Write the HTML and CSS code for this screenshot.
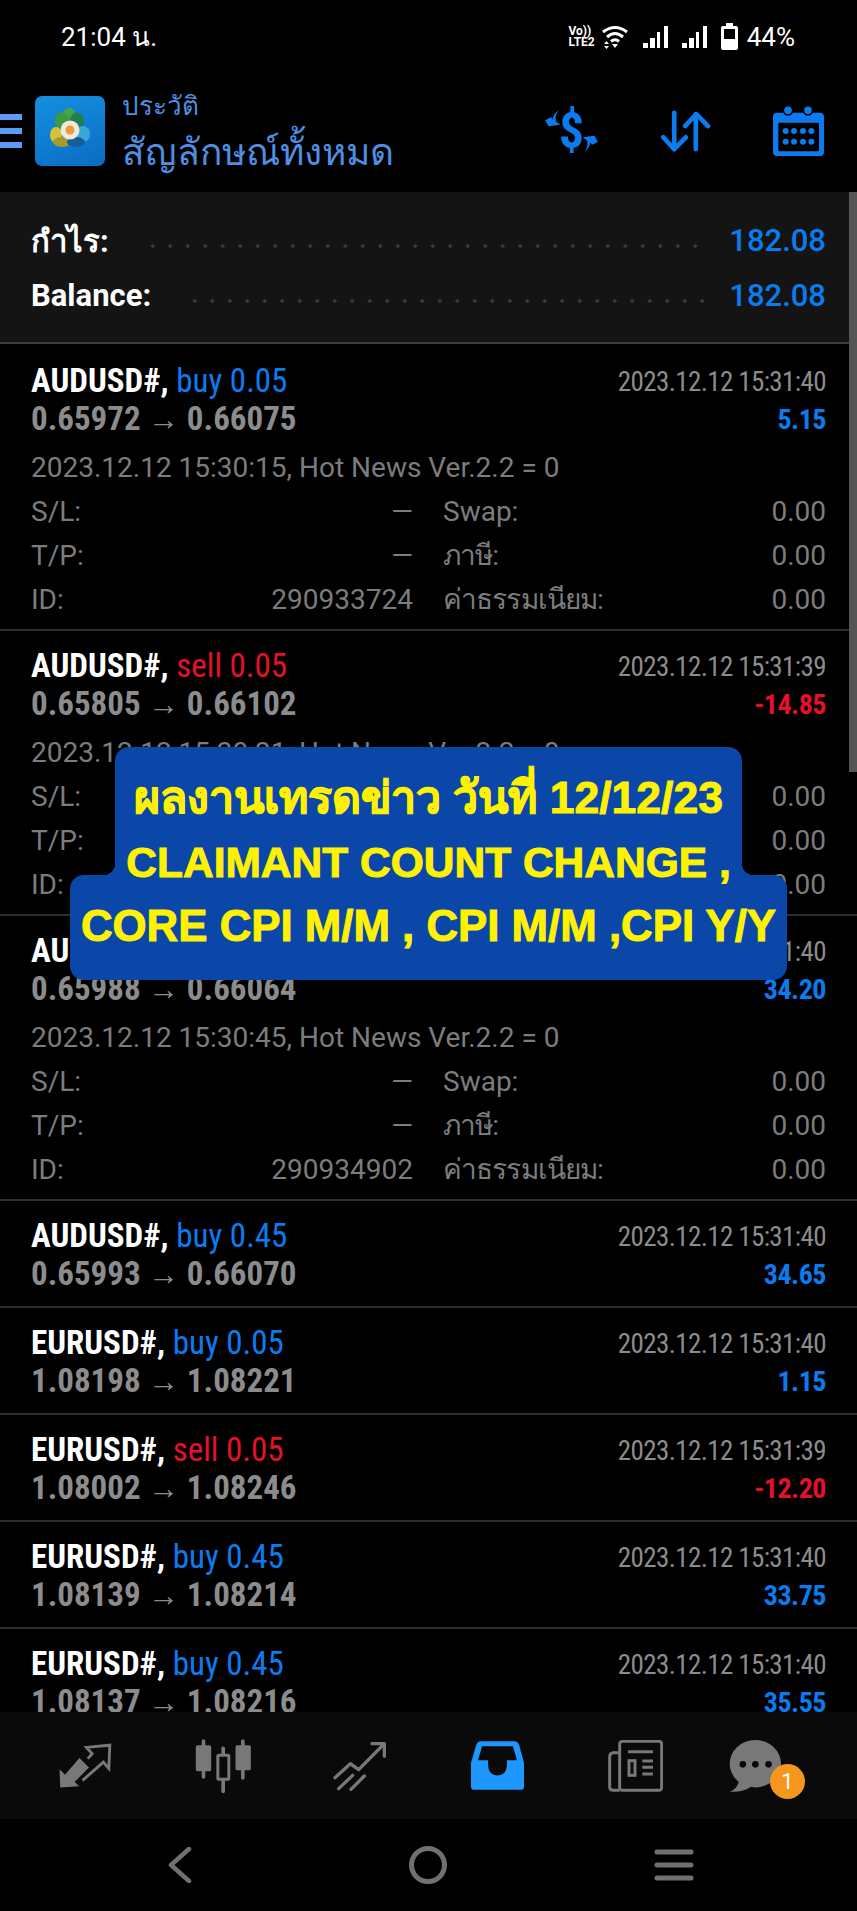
FILE: index.html
```html
<!DOCTYPE html>
<html lang="th">
<head>
    <meta charset="UTF-8">
    <meta name="viewport" content="width=device-width, initial-scale=1.0">
    <title>ประวัติ</title>
    <link rel="stylesheet" href="styles.css">
</head>
<body>
    <div class="status-bar">
        <span class="clock">21:04 น.</span>
        <div class="status-icons">
            <span class="volte"><span>Vo))</span><span>LTE2</span></span>
            <svg class="wifi" width="28" height="24" viewBox="0 0 28 24" fill="none" stroke="#fff" stroke-width="3">
                <path d="M2 7Q14 -2 26 7"/>
                <path d="M6 12Q14 5 22 12"/>
                <path d="M10 16.500Q14 13 18 16.500"/>
                <path d="M3 19L5.500 16L8 19ZM3 21L5.500 24L8 21Z" fill="#fff" stroke="none"/>
                <path d="M11 19H17L14 23Z" fill="#fff" stroke="none"/>
            </svg>
            <svg class="signal" width="25" height="22" viewBox="0 0 25 22" fill="#fff">
                <rect x="0" y="17" width="5" height="5"/><rect x="7" y="12" width="5" height="10"/><rect x="14" y="6" width="3" height="16"/><rect x="21" y="0" width="4" height="22"/>
            </svg>
            <svg class="signal" width="25" height="22" viewBox="0 0 25 22" fill="#fff">
                <rect x="0" y="17" width="5" height="5"/><rect x="7" y="12" width="5" height="10"/><rect x="14" y="6" width="3" height="16"/><rect x="21" y="0" width="4" height="22"/>
            </svg>
            <svg class="battery" width="17" height="27" viewBox="0 0 17 27">
                <path d="M5 0H12V3H15Q17 3 17 5V25Q17 27 15 27H2Q0 27 0 25V5Q0 3 2 3H5Z" fill="#fff"/>
                <rect x="3" y="6" width="11" height="10" fill="#000"/>
            </svg>
            <span class="battery-level">44%</span>
        </div>
    </div>

    <header class="top-bar">
        <div class="menu-bars"><i></i><i></i><i></i></div>
        <div class="app-logo">
            <svg width="70" height="70" viewBox="0 0 70 70">
                <ellipse cx="34" cy="18" rx="6" ry="6" fill="#4aa54a"/>
                <ellipse cx="27" cy="25" rx="7" ry="9" fill="#3f9a45"/>
                <ellipse cx="42" cy="25" rx="7" ry="9" fill="#1f7f50"/>
                <ellipse cx="21" cy="39" rx="6" ry="8" fill="#d8c23c"/>
                <ellipse cx="27" cy="46" rx="9" ry="5" fill="#a89a2e"/>
                <ellipse cx="48" cy="38" rx="7" ry="8" fill="#3aa7d8"/>
                <ellipse cx="41" cy="46" rx="9" ry="5" fill="#155f96"/>
                <circle cx="35" cy="34" r="9.500" fill="#f0e9dc"/>
                <circle cx="35" cy="34" r="4.500" fill="#ee9a3a"/>
            </svg>
        </div>
        <div class="titles">
            <div class="title-small">ประวัติ</div>
            <div class="title-large">สัญลักษณ์ทั้งหมด</div>
        </div>
        <div class="top-actions">
            <svg class="icon-dollar" width="53" height="44" viewBox="20 298 158 132" fill="#0a7cf0">
                <text x="99" y="414" text-anchor="middle" class="dollar-glyph">$</text>
                <path d="M62 300Q48 315 52 335L65 345L30 350L20 332L38 322L42 330Q45 312 62 300Z"/>
                <path d="M62 300Q48 315 52 335L65 345L30 350L20 332L38 322L42 330Q45 312 62 300Z" transform="rotate(180 99 364)"/>
            </svg>
            <svg width="51" height="42" viewBox="362 300 154 126" fill="none" stroke="#0a7cf0" stroke-width="14" stroke-linecap="round" stroke-linejoin="round">
                <path d="M405 308V418M372 382L405 418L440 382"/>
                <path d="M470 418V312M438 348L472 312L507 348"/>
            </svg>
            <svg width="51" height="50" viewBox="700 285 153 150" fill="#0a7cf0">
                <rect x="700" y="305" width="153" height="130" rx="12"/>
                <rect x="716" y="335" width="122" height="86" rx="4" fill="#000"/>
                <circle cx="745" cy="298" r="14" stroke="#000" stroke-width="5"/>
                <circle cx="805" cy="298" r="14" stroke="#000" stroke-width="5"/>
                <circle cx="738" cy="360" r="9"/><circle cx="763" cy="360" r="9"/><circle cx="790" cy="360" r="9"/><circle cx="815" cy="360" r="9"/>
                <circle cx="738" cy="392" r="9"/><circle cx="763" cy="392" r="9"/><circle cx="790" cy="392" r="9"/><circle cx="815" cy="392" r="9"/>
            </svg>
        </div>
    </header>

    <main class="history">
        <section class="summary">
            <div class="summary-row"><span class="summary-label">กำไร:</span><span class="leader"></span><span class="summary-value">182.08</span></div>
            <div class="summary-row"><span class="summary-label">Balance:</span><span class="leader"></span><span class="summary-value">182.08</span></div>
        </section>

        <article class="deal">
            <div class="deal-line"><span class="deal-title">AUDUSD#, <b class="buy">buy 0.05</b></span><span class="deal-time">2023.12.12 15:31:40</span></div>
            <div class="deal-line"><span class="deal-prices">0.65972 <em>→</em> 0.66075</span><span class="deal-profit buy">5.15</span></div>
            <div class="deal-note">2023.12.12 15:30:15, Hot News Ver.2.2 = 0</div>
            <div class="deal-grid">
                <span>S/L:</span><span class="val">—</span><span class="key">Swap:</span><span class="val">0.00</span>
                <span>T/P:</span><span class="val">—</span><span class="key thai">ภาษี:</span><span class="val">0.00</span>
                <span>ID:</span><span class="val">290933724</span><span class="key thai">ค่าธรรมเนียม:</span><span class="val">0.00</span>
            </div>
        </article>
        <article class="deal">
            <div class="deal-line"><span class="deal-title">AUDUSD#, <b class="sell">sell 0.05</b></span><span class="deal-time">2023.12.12 15:31:39</span></div>
            <div class="deal-line"><span class="deal-prices">0.65805 <em>→</em> 0.66102</span><span class="deal-profit sell">-14.85</span></div>
            <div class="deal-note">2023.12.12 15:30:31, Hot News Ver.2.2 = 0</div>
            <div class="deal-grid">
                <span>S/L:</span><span class="val">—</span><span class="key">Swap:</span><span class="val">0.00</span>
                <span>T/P:</span><span class="val">—</span><span class="key thai">ภาษี:</span><span class="val">0.00</span>
                <span>ID:</span><span class="val">290934311</span><span class="key thai">ค่าธรรมเนียม:</span><span class="val">0.00</span>
            </div>
        </article>
        <article class="deal">
            <div class="deal-line"><span class="deal-title">AUDUSD#, <b class="buy">buy 0.45</b></span><span class="deal-time">2023.12.12 15:31:40</span></div>
            <div class="deal-line"><span class="deal-prices">0.65988 <em>→</em> 0.66064</span><span class="deal-profit buy">34.20</span></div>
            <div class="deal-note">2023.12.12 15:30:45, Hot News Ver.2.2 = 0</div>
            <div class="deal-grid">
                <span>S/L:</span><span class="val">—</span><span class="key">Swap:</span><span class="val">0.00</span>
                <span>T/P:</span><span class="val">—</span><span class="key thai">ภาษี:</span><span class="val">0.00</span>
                <span>ID:</span><span class="val">290934902</span><span class="key thai">ค่าธรรมเนียม:</span><span class="val">0.00</span>
            </div>
        </article>
        <article class="deal">
            <div class="deal-line"><span class="deal-title">AUDUSD#, <b class="buy">buy 0.45</b></span><span class="deal-time">2023.12.12 15:31:40</span></div>
            <div class="deal-line"><span class="deal-prices">0.65993 <em>→</em> 0.66070</span><span class="deal-profit buy">34.65</span></div>
        </article>
        <article class="deal">
            <div class="deal-line"><span class="deal-title">EURUSD#, <b class="buy">buy 0.05</b></span><span class="deal-time">2023.12.12 15:31:40</span></div>
            <div class="deal-line"><span class="deal-prices">1.08198 <em>→</em> 1.08221</span><span class="deal-profit buy">1.15</span></div>
        </article>
        <article class="deal">
            <div class="deal-line"><span class="deal-title">EURUSD#, <b class="sell">sell 0.05</b></span><span class="deal-time">2023.12.12 15:31:39</span></div>
            <div class="deal-line"><span class="deal-prices">1.08002 <em>→</em> 1.08246</span><span class="deal-profit sell">-12.20</span></div>
        </article>
        <article class="deal">
            <div class="deal-line"><span class="deal-title">EURUSD#, <b class="buy">buy 0.45</b></span><span class="deal-time">2023.12.12 15:31:40</span></div>
            <div class="deal-line"><span class="deal-prices">1.08139 <em>→</em> 1.08214</span><span class="deal-profit buy">33.75</span></div>
        </article>
        <article class="deal">
            <div class="deal-line"><span class="deal-title">EURUSD#, <b class="buy">buy 0.45</b></span><span class="deal-time">2023.12.12 15:31:40</span></div>
            <div class="deal-line"><span class="deal-prices">1.08137 <em>→</em> 1.08216</span><span class="deal-profit buy">35.55</span></div>
        </article>

        <div class="scroll-thumb"></div>
    </main>

    <div class="banner">
        <div class="banner-top">
            <p class="banner-thai">ผลงานเทรดข่าว วันที่ 12/12/23</p>
            <p>CLAIMANT COUNT CHANGE ,</p>
        </div>
        <div class="banner-bottom">
            <p>CORE CPI M/M , CPI M/M ,CPI Y/Y</p>
        </div>
    </div>

    <nav class="tab-bar">
        <svg class="tab-trade" width="56" height="50" viewBox="50 45 175 150">
            <path d="M60 187L58 130L75 147L120 95L150 125L105 170L120 183Z" fill="#787878"/>
            <path d="M130 165L195 108L212 128L215 55L142 62L160 82L146 97" fill="none" stroke="#787878" stroke-width="9"/>
        </svg>
        <svg class="tab-quotes" width="57" height="54" viewBox="465 38 170 162" fill="#787878" stroke="#787878" stroke-linecap="round">
            <rect x="467" y="57" width="46" height="78" rx="5" stroke="none"/>
            <path d="M490 44V152M608 44V155M549 66V195" fill="none" stroke-width="11"/>
            <rect x="586" y="57" width="46" height="75" rx="5" stroke="none"/>
            <rect x="533" y="87" width="33" height="72" rx="3" fill="#0a0a0a" stroke-width="9"/>
        </svg>
        <svg class="tab-chart" width="55" height="50" viewBox="880 42 165 150" fill="none" stroke="#787878" stroke-width="10" stroke-linecap="round" stroke-linejoin="round">
            <path d="M889 152L935 110L960 128L1032 55M1000 50H1037V88"/>
            <path d="M900 185L942 145M937 187L977 147"/>
        </svg>
        <svg class="tab-inbox" width="53" height="49" viewBox="65 45 158 145">
            <path d="M95 45H193Q205 45 209 58L223 110V180Q223 190 213 190H75Q65 190 65 180V110L80 58Q84 45 95 45Z" fill="#1e98ff"/>
            <path d="M98 60H190L202 102H172V118Q170 147 144 147Q118 147 116 118V102H86Z" fill="#0a0a0a"/>
        </svg>
        <svg class="tab-news" width="55" height="52" viewBox="475 40 165 156" fill="none" stroke="#787878" stroke-width="9">
            <rect x="510" y="44" width="126" height="147" rx="8"/>
            <path d="M510 191H492Q480 191 480 180V90Q480 80 490 78H510"/>
            <path d="M535 75H610M578 103H610M578 122H610M578 142H610"/>
            <rect x="538" y="102" width="18" height="44"/>
        </svg>
        <div class="tab-chat">
            <svg width="54" height="52" viewBox="840 38 160 158">
                <ellipse cx="918" cy="110" rx="78" ry="72" fill="#787878"/>
                <path d="M868 160Q866 185 840 195Q880 198 905 180Z" fill="#787878"/>
                <circle cx="880" cy="112" r="10" fill="#0a0a0a"/><circle cx="918" cy="112" r="10" fill="#0a0a0a"/><circle cx="958" cy="112" r="10" fill="#0a0a0a"/>
            </svg>
            <span class="chat-badge">1</span>
        </div>
    </nav>

    <div class="system-nav">
        <svg width="24" height="36" viewBox="0 0 24 36" fill="none" stroke="#707070" stroke-width="4.500" stroke-linecap="round" stroke-linejoin="round"><path d="M21 2L3 18L21 34"/></svg>
        <svg class="nav-home" width="38" height="38" viewBox="0 0 38 38" fill="none" stroke="#707070" stroke-width="5"><circle cx="19" cy="19" r="16.500"/></svg>
        <svg class="nav-recents" width="40" height="32" viewBox="0 0 40 32" fill="none" stroke="#707070" stroke-width="5" stroke-linecap="round"><path d="M3 3H37M3 16H37M3 29H37"/></svg>
    </div>
</body>
</html>
```

FILE: styles.css
```css
:root {
    --blue: #0a7cf0;
    --red: #e4112b;
    --grey-text: #7c7c7c;
    --bold-grey: #8c8c8c;
    --rule: #2c2c2c;
    --banner-bg: #0a47a8;
}

* {
    box-sizing: border-box;
}

body {
    margin: 0;
    width: 857px;
    height: 1911px;
    display: flex;
    flex-direction: column;
    position: relative;
    overflow: hidden;
    background-color: #000;
    color: #fff;
    font-family: Roboto, "Noto Sans", sans-serif;
}

.status-bar {
    height: 75px;
    padding: 0 62px 2px 61px;
    display: flex;
    align-items: center;
    justify-content: space-between;
    font-size: 26px;
}

.status-icons {
    display: flex;
    align-items: center;
    gap: 6px;
}

.volte {
    display: flex;
    flex-direction: column;
    font-size: 12px;
    font-weight: 700;
    line-height: 11px;
}

.signal {
    margin-left: 8px;
}

.battery {
    margin-left: 8px;
}

.battery-level {
    margin-left: 3px;
}

.top-bar {
    height: 112px;
    margin-bottom: 5px;
    display: flex;
    align-items: center;
}

.menu-bars {
    width: 22px;
    margin-right: 13px;
    display: flex;
    flex-direction: column;
    gap: 8px;
}

.menu-bars i {
    display: block;
    height: 6px;
    background-color: #5b9bf5;
}

.app-logo {
    width: 70px;
    height: 70px;
    border-radius: 7px;
    background: linear-gradient(160deg, #1490e0, #0b6cc4);
}

.titles {
    margin-left: 17px;
    color: #4f8fe0;
}

.title-small {
    font-size: 26px;
    line-height: 44px;
}

.title-large {
    font-size: 37px;
    line-height: 50px;
}

.top-actions {
    margin-left: auto;
    margin-right: 33px;
    display: flex;
    align-items: center;
    gap: 62px;
}

.icon-dollar {
    overflow: visible;
}

.dollar-glyph {
    font-family: Roboto, sans-serif;
    font-size: 148px;
    font-weight: 700;
    font-stretch: 75%;
}

.history {
    flex: 1;
    min-height: 0;
    position: relative;
    overflow: hidden;
}

.summary {
    height: 152px;
    padding: 21px 31px 0;
    background-color: #141414;
    border-bottom: 2px solid #3c3c3c;
}

.summary-row {
    height: 55px;
    display: flex;
    align-items: center;
    font-size: 31px;
}

.summary-label {
    font-weight: 700;
}

.leader {
    flex: 1;
    height: 4px;
    margin: 10px 25px 0 35px;
    background-image: radial-gradient(circle, #3a3a3a 1.500px, transparent 2px);
    background-size: 17.500px 4px;
}

.summary-value {
    font-weight: 500;
    color: var(--blue);
}

.deal {
    padding: 15px 31px 0;
    border-bottom: 2px solid var(--rule);
}

.summary + .deal {
    padding-top: 17px;
}

.deal-line {
    height: 38px;
    display: flex;
    align-items: center;
    justify-content: space-between;
    font-stretch: 75%;
}

.deal-line + .deal-line {
    height: 39px;
    margin-bottom: 13px;
}

.deal-title {
    font-size: 33px;
    font-weight: 700;
    white-space: pre;
}

.deal-title b {
    font-weight: 400;
}

.deal-time {
    margin-top: 3px;
    font-size: 27px;
    letter-spacing: -0.600px;
    color: var(--bold-grey);
}

.deal-prices {
    font-size: 33px;
    font-weight: 700;
    color: var(--bold-grey);
}

.deal-prices em {
    font-style: normal;
    font-weight: 400;
    font-size: 31px;
}

.deal-profit {
    margin-top: 1px;
    font-size: 28px;
    font-weight: 700;
    letter-spacing: -0.500px;
}

.buy {
    color: var(--blue);
}

.sell {
    color: var(--red);
}

.deal-note {
    height: 44px;
    margin-top: -5px;
    line-height: 44px;
    font-size: 28px;
    color: var(--grey-text);
}

.deal-grid {
    display: grid;
    grid-template-columns: 180px 202px 1fr 90px;
    margin-bottom: 7px;
    font-size: 28px;
    line-height: 44px;
    color: var(--grey-text);
}

.deal-grid .val {
    text-align: right;
}

.deal-grid .key {
    padding-left: 30px;
}

.deal-grid .thai {
    letter-spacing: -0.900px;
}

.scroll-thumb {
    position: absolute;
    top: 0;
    right: 0;
    width: 8px;
    height: 580px;
    background-color: #555;
}

.banner {
    position: absolute;
    top: 747px;
    left: 70px;
    width: 717px;
    display: flex;
    flex-direction: column;
    align-items: center;
    font-family: "Liberation Sans", Arial, sans-serif;
    font-weight: 700;
    font-size: 42.500px;
    -webkit-text-stroke: 1px #fff200;
    color: #fff200;
    text-align: center;
    white-space: nowrap;
}

.banner p {
    margin: 0;
    line-height: 65px;
}

.banner-top {
    position: relative;
    z-index: 1;
    width: 627px;
    height: 128px;
    padding-top: 18px;
    background-color: var(--banner-bg);
    border-radius: 14px 14px 0 0;
}

.banner-top::before,
.banner-top::after {
    content: "";
    position: absolute;
    bottom: 0;
    width: 12px;
    height: 12px;
}

.banner-top::before {
    left: -12px;
    background-image: radial-gradient(circle at 0 0, transparent 12px, var(--banner-bg) 12.500px);
}

.banner-top::after {
    right: -12px;
    background-image: radial-gradient(circle at 100% 0, transparent 12px, var(--banner-bg) 12.500px);
}

.banner-thai {
    font-size: 44.500px;
}

.banner-bottom {
    width: 717px;
    height: 105px;
    padding-top: 18px;
    font-size: 43.800px;
    background-color: var(--banner-bg);
    border-radius: 14px;
}

.tab-bar {
    height: 107px;
    display: flex;
    align-items: center;
    padding-left: 57px;
    background-color: #0a0a0a;
}

.tab-quotes {
    margin-left: 82px;
}

.tab-chart {
    margin-left: 80px;
}

.tab-inbox {
    margin-left: 84px;
}

.tab-news {
    margin-left: 84px;
}

.tab-chat {
    position: relative;
    display: flex;
    margin-left: 66px;
}

.chat-badge {
    position: absolute;
    top: 24px;
    left: 41px;
    width: 35px;
    height: 35px;
    border-radius: 50%;
    background-color: #f7961d;
    text-align: center;
    line-height: 35px;
    font-size: 22px;
}

.system-nav {
    height: 92px;
    display: flex;
    align-items: center;
    padding-left: 168px;
}

.nav-home {
    margin-left: 217px;
}

.nav-recents {
    margin-left: 207px;
}
```
